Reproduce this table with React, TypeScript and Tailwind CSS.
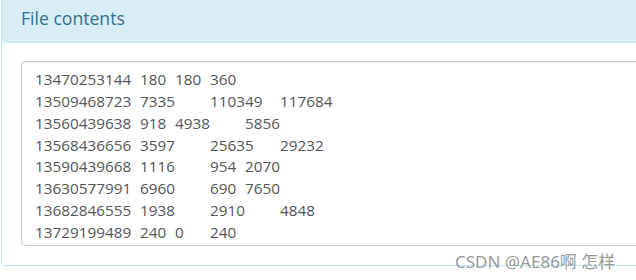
import React from "react";

type Cell = { t: string; w: string };

const rows: Cell[][] = [
  [
    { t: "13470253144", w: "w-[105px]" },
    { t: "180", w: "w-[35px]" },
    { t: "180", w: "w-[35px]" },
    { t: "360", w: "" },
  ],
  [
    { t: "13509468723", w: "w-[105px]" },
    { t: "7335", w: "w-[70px]" },
    { t: "110349", w: "w-[70px]" },
    { t: "117684", w: "" },
  ],
  [
    { t: "13560439638", w: "w-[105px]" },
    { t: "918", w: "w-[35px]" },
    { t: "4938", w: "w-[70px]" },
    { t: "5856", w: "" },
  ],
  [
    { t: "13568436656", w: "w-[105px]" },
    { t: "3597", w: "w-[70px]" },
    { t: "25635", w: "w-[70px]" },
    { t: "29232", w: "" },
  ],
  [
    { t: "13590439668", w: "w-[105px]" },
    { t: "1116", w: "w-[70px]" },
    { t: "954", w: "w-[35px]" },
    { t: "2070", w: "" },
  ],
  [
    { t: "13630577991", w: "w-[105px]" },
    { t: "6960", w: "w-[70px]" },
    { t: "690", w: "w-[35px]" },
    { t: "7650", w: "" },
  ],
  [
    { t: "13682846555", w: "w-[105px]" },
    { t: "1938", w: "w-[70px]" },
    { t: "2910", w: "w-[70px]" },
    { t: "4848", w: "" },
  ],
  [
    { t: "13729199489", w: "w-[105px]" },
    { t: "240", w: "w-[35px]" },
    { t: "0", w: "w-[35px]" },
    { t: "240", w: "" },
  ],
];

export default function App() {
  return (
    <div className="relative w-[636px] h-[280px] overflow-hidden bg-white font-['Open_Sans',sans-serif]">
      <div className="pl-[1px] w-[700px]">
        <div className="border border-t-0 border-[#bce8f1] rounded-b-[4px] bg-white">
          <div className="h-[43px] bg-[#d9edf7] border-b border-[#bce8f1] pl-[19px] flex items-start">
            <span className="text-[17.6px] leading-[26px] pt-[5px] text-[#31708f]">File contents</span>
          </div>
          <div className="pt-[18px] pb-[19px] pl-[19px] pr-[19px]">
            <div className="h-[185px] overflow-hidden border border-[#cccccc] rounded-[4px] shadow-[inset_0_1px_1px_rgba(0,0,0,0.075)] pl-[13px] pt-[7px] text-[15.3px] leading-[21.86px] text-[#555555]">
              {rows.map((r, i) => (
                <div key={i} className="flex whitespace-pre">
                  {r.map((c, j) => (
                    <span key={j} className={c.w + " shrink-0"}>
                      {c.t}
                    </span>
                  ))}
                </div>
              ))}
            </div>
          </div>
        </div>
      </div>
      <div className="absolute left-[455px] top-[250px] text-[17px] leading-[24px] text-[#9a9a9a] font-['Noto_Sans','Noto_Sans_CJK_SC',sans-serif] whitespace-nowrap">
        CSDN @AE86啊 怎样
      </div>
    </div>
  );
}
